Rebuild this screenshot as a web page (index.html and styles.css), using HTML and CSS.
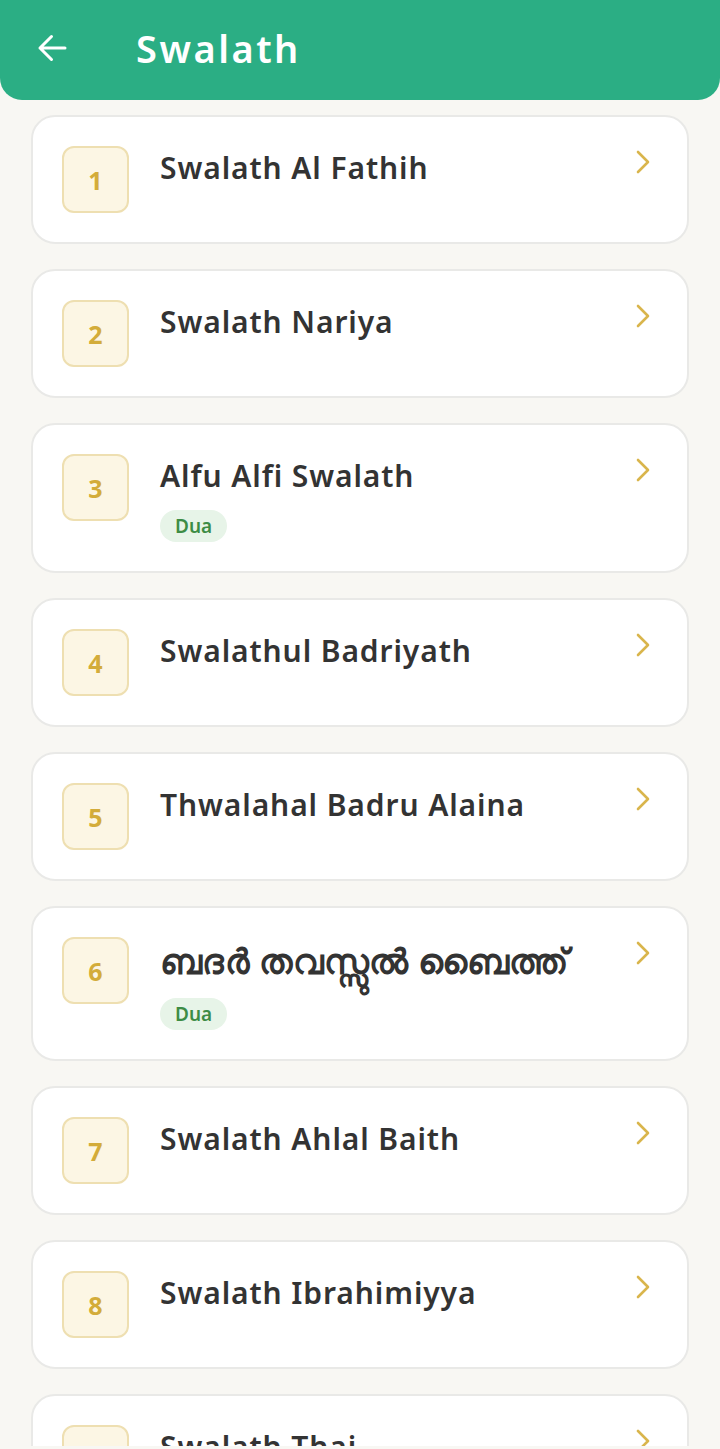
FILE: index.html
```html
<!DOCTYPE html>
<html lang="en">
<head>
    <meta charset="UTF-8">
    <meta name="viewport" content="width=device-width, initial-scale=1.0">
    <title>Swalath</title>
    <link rel="stylesheet" href="styles.css">
</head>
<body>
<!-- Top bar -->
<div class="topbar">
    <svg class="back-btn" width="32" height="32" viewBox="0 0 32 32"><path d="M29 16H4M15.5 4.5L4 16l11.5 11.5" fill="none" stroke="#fff" stroke-width="3" stroke-linecap="round" stroke-linejoin="round"/></svg>
    <h1 class="page-title">Swalath</h1>
</div>
<!-- List -->
<div class="list-wrap">
<div id="list" class="list"></div>
</div>
<script>
    let items=[
        {"no":1,"name":"Swalath Al Fathih","dua":false},
        {"no":2,"name":"Swalath Nariya","dua":false},
        {"no":3,"name":"Alfu Alfi Swalath","dua":true},
        {"no":4,"name":"Swalathul Badriyath","dua":false},
        {"no":5,"name":"Thwalahal Badru Alaina","dua":false},
        {"no":6,"name":"ബദർ തവസ്സുൽ ബൈത്ത്","dua":true,"lang":"ml"},
        {"no":7,"name":"Swalath Ahlal Baith","dua":false},
        {"no":8,"name":"Swalath Ibrahimiyya","dua":false},
        {"no":9,"name":"Swalath Thai","dua":false}
    ]
    let listEle=document.getElementById("list");
    items.forEach(element => {
        let div=document.createElement("div");
        div.className="card";
        div.innerHTML=`
<div class="num-box">${element.no}</div>
<div class="card-body">
    <h2 class="card-title" lang="${element.lang || 'en'}">${element.name}</h2>
    ${element.dua ? '<span class="tag">Dua</span>' : ''}
</div>
<svg class="chevron" width="16" height="24" viewBox="0 0 16 24"><path d="M3 2l10 10-10 10" fill="none" stroke="#d9b54c" stroke-width="2.6" stroke-linecap="round" stroke-linejoin="round"/></svg>
        `
        listEle.appendChild(div)
    });
</script>
</body>
</html>
```
FILE: styles.css
```css
/* Basic page styling */
body {
margin: 0;background-color: #f8f7f3;
font-family: "Noto Sans", "Open Sans", sans-serif;
}
/* Top bar */
.topbar {
background-color: #2bae84;height: 100px;box-sizing: border-box;
display: flex;align-items: center;padding: 0 0 4px 36px;
border-radius: 0 0 22px 22px;
}
.back-btn {
margin-right: 68px;
}
.page-title {
color: #fff;font-size: 38px;font-weight: 600;margin: 0;letter-spacing: 2.5px;
}
/* List */
.list-wrap {
height: 1346px;overflow: hidden;
}
.list {
display: flex;flex-direction: column;gap: 25px;padding: 15px 31px 0 31px;
}
.card {
display: flex;align-items: flex-start;background-color: #fff;
border: 2px solid #e9e9e7;border-radius: 24px;padding: 29px 36px 29px 29px;
}
.num-box {
width: 63px;height: 63px;flex-shrink: 0;display: flex;align-items: center;justify-content: center;
background-color: #fcf6e4;border: 2px solid #eedfb1;border-radius: 12px;
color: #d3ac3a;font-size: 25px;font-weight: 700;
}
.card-body {
flex: 1;padding-left: 31px;
}
.card-title {
font-size: 30px;font-weight: 600;color: #333;margin: 0;line-height: 44px;letter-spacing: 0.9px;
}
.card-title:lang(ml) {
font-size: 35px;line-height: 48px;letter-spacing: 0.3px;
}
.tag {
display: inline-block;margin-top: 12px;background-color: #e7f4e8;color: #3d8c45;
font-size: 19px;font-weight: 600;line-height: 32px;padding: 0 15px;border-radius: 16px;
}
.card-title:lang(ml) + .tag {
margin-top: 13px;
}
.chevron {
margin-top: 4px;
}
```
